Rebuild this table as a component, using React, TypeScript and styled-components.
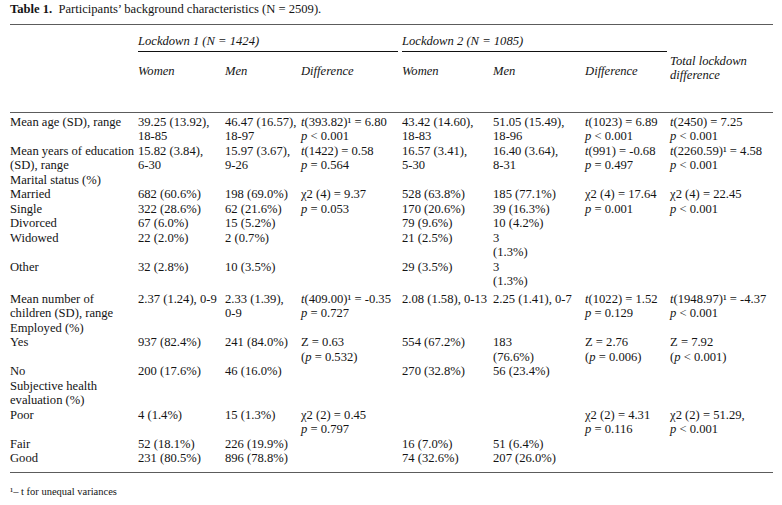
import React from "react";
import styled, { createGlobalStyle } from "styled-components";

const GlobalStyle = createGlobalStyle`
  html, body {
    margin: 0;
    padding: 0;
    background: #ffffff;
  }
  body {
    font-family: "Liberation Serif", "DejaVu Serif", serif;
    color: #141414;
  }
`;

const Page = styled.div`
  width: 782px;
  height: 505px;
  box-sizing: border-box;
  padding: 2px 9px 0 10px;
  font-size: 12.6px;
  line-height: 14.5px;
`;

const Caption = styled.div`
  margin-bottom: 7px;
`;

const Bold = styled.b`
  font-weight: 700;
  margin-right: 3px;
`;

const Table = styled.table`
  width: 763px;
  table-layout: fixed;
  border-collapse: collapse;
  border-top: 1px solid #5c5c5c;
  border-bottom: 1px solid #5c5c5c;

  thead {
    border-bottom: 1px solid #5c5c5c;
  }
`;

const Th = styled.th<{ $pt?: number; $pb?: number; $middle?: boolean }>`
  padding: ${(p) => p.$pt ?? 0}px 0 ${(p) => p.$pb ?? 0}px 0;
  text-align: left;
  font-weight: 400;
  font-style: italic;
  vertical-align: ${(p) => (p.$middle ? "middle" : "top")};
  white-space: nowrap;
`;

const Span = styled.div<{ $gap: number }>`
  padding: 9px 0 3px;
  margin-right: ${(p) => p.$gap}px;
  border-bottom: 1px solid #111;
`;

const Td = styled.td<{ $pt?: number; $pb?: number }>`
  padding: ${(p) => p.$pt ?? 0}px 0 ${(p) => p.$pb ?? 0}px 0;
  vertical-align: top;
  white-space: nowrap;
  text-align: left;
`;

const I = styled.i`
  font-style: italic;
`;

const Footnote = styled.div`
  margin-top: 13px;
  font-size: 10.5px;
  line-height: 12px;
`;

const widths = [128, 87, 76, 101, 91, 92, 85, 103];

type Cell = React.ReactNode;
type Row = { cells: Cell[]; spans?: Record<number, number>; skip?: number[]; pt?: number; pb?: number };

const L = ({ lines }: { lines: React.ReactNode[] }) => (
  <>
    {lines.map((l, i) => (
      <div key={i}>{l}</div>
    ))}
  </>
);

const tl = (df: string, v: string, sup = false) => (
  <>
    <I>t</I>({df}){sup ? "¹" : ""} = {v}
  </>
);
const pv = (op: string, v: string, paren = false) =>
  paren ? (
    <>
      (<I>p</I> {op} {v})
    </>
  ) : (
    <>
      <I>p</I> {op} {v}
    </>
  );

const rows: Row[] = [
  {
    pt: 2,
    cells: [
      "Mean age (SD), range",
      <L lines={["39.25 (13.92),", "18-85"]} />,
      <L lines={["46.47 (16.57),", "18-97"]} />,
      <L lines={[tl("393.82", "6.80", true), pv("<", "0.001")]} />,
      <L lines={["43.42 (14.60),", "18-83"]} />,
      <L lines={["51.05 (15.49),", "18-96"]} />,
      <L lines={[tl("1023", "6.89"), pv("<", "0.001")]} />,
      <L lines={[tl("2450", "7.25"), pv("<", "0.001")]} />,
    ],
  },
  {
    cells: [
      <L lines={["Mean years of education", "(SD), range"]} />,
      <L lines={["15.82 (3.84),", "6-30"]} />,
      <L lines={["15.97 (3.67),", "9-26"]} />,
      <L lines={[tl("1422", "0.58"), pv("=", "0.564")]} />,
      <L lines={["16.57 (3.41),", "5-30"]} />,
      <L lines={["16.40 (3.64),", "8-31"]} />,
      <L lines={[tl("991", "-0.68"), pv("=", "0.497")]} />,
      <L lines={[tl("2260.59", "4.58", true), pv("<", "0.001")]} />,
    ],
  },
  { cells: ["Marital status (%)", "", "", "", "", "", "", ""] },
  {
    spans: { 3: 2, 6: 2, 7: 2 },
    cells: [
      "Married",
      "682 (60.6%)",
      "198 (69.0%)",
      <L lines={["χ2 (4) = 9.37", pv("=", "0.053")]} />,
      "528 (63.8%)",
      "185 (77.1%)",
      <L lines={["χ2 (4) = 17.64", pv("=", "0.001")]} />,
      <L lines={["χ2 (4) = 22.45", pv("<", "0.001")]} />,
    ],
  },
  {
    skip: [3, 6, 7],
    cells: ["Single", "322 (28.6%)", "62 (21.6%)", null, "170 (20.6%)", "39 (16.3%)", null, null],
  },
  { cells: ["Divorced", "67 (6.0%)", "15 (5.2%)", "", "79 (9.6%)", "10 (4.2%)", "", ""] },
  {
    cells: ["Widowed", "22 (2.0%)", "2 (0.7%)", "", "21 (2.5%)", <L lines={["3", "(1.3%)"]} />, "", ""],
  },
  {
    pb: 3,
    cells: ["Other", "32 (2.8%)", "10 (3.5%)", "", "29 (3.5%)", <L lines={["3", "(1.3%)"]} />, "", ""],
  },
  {
    cells: [
      <L lines={["Mean number of", "children (SD), range"]} />,
      "2.37 (1.24), 0-9",
      <L lines={["2.33 (1.39),", "0-9"]} />,
      <L lines={[tl("409.00", "-0.35", true), pv("=", "0.727")]} />,
      "2.08 (1.58), 0-13",
      "2.25 (1.41), 0-7",
      <L lines={[tl("1022", "1.52"), pv("=", "0.129")]} />,
      <L lines={[tl("1948.97", "-4.37", true), pv("<", "0.001")]} />,
    ],
  },
  { cells: ["Employed (%)", "", "", "", "", "", "", ""] },
  {
    cells: [
      "Yes",
      "937 (82.4%)",
      "241 (84.0%)",
      <L lines={["Z = 0.63", pv("=", "0.532", true)]} />,
      "554 (67.2%)",
      <L lines={["183", "(76.6%)"]} />,
      <L lines={["Z = 2.76", pv("=", "0.006", true)]} />,
      <L lines={["Z = 7.92", pv("<", "0.001", true)]} />,
    ],
  },
  { cells: ["No", "200 (17.6%)", "46 (16.0%)", "", "270 (32.8%)", "56 (23.4%)", "", ""] },
  { cells: [<L lines={["Subjective health", "evaluation (%)"]} />, "", "", "", "", "", "", ""] },
  {
    cells: [
      "Poor",
      "4 (1.4%)",
      "15 (1.3%)",
      <L lines={["χ2 (2) = 0.45", pv("=", "0.797")]} />,
      "",
      "",
      <L lines={["χ2 (2) = 4.31", pv("=", "0.116")]} />,
      <L lines={["χ2 (2) = 51.29,", pv("<", "0.001")]} />,
    ],
  },
  { cells: ["Fair", "52 (18.1%)", "226 (19.9%)", "", "16 (7.0%)", "51 (6.4%)", "", ""] },
  { pb: 6, cells: ["Good", "231 (80.5%)", "896 (78.8%)", "", "74 (32.6%)", "207 (26.0%)", "", ""] },
];

export default function App() {
  return (
    <>
      <GlobalStyle />
      <Page>
        <Caption>
          <Bold>Table 1.</Bold> Participants’ background characteristics (N = 2509).
        </Caption>
        <Table>
          <colgroup>
            {widths.map((w, i) => (
              <col key={i} style={{ width: w }} />
            ))}
          </colgroup>
          <thead>
            <tr>
              <Th />
              <Th colSpan={3}>
                <Span $gap={4}>Lockdown 1 (N = 1424)</Span>
              </Th>
              <Th colSpan={3}>
                <Span $gap={3}>Lockdown 2 (N = 1085)</Span>
              </Th>
              <Th rowSpan={2} $middle>
                <L lines={["Total lockdown", "difference"]} />
              </Th>
            </tr>
            <tr>
              <Th />
              {["Women", "Men", "Difference", "Women", "Men", "Difference"].map((h, i) => (
                <Th key={i} $pt={12} $pb={33}>
                  {h}
                </Th>
              ))}
            </tr>
          </thead>
          <tbody>
            {rows.map((r, ri) => (
              <tr key={ri}>
                {r.cells.map((c, ci) =>
                  r.skip?.includes(ci) ? null : (
                    <Td key={ci} rowSpan={r.spans?.[ci]} $pt={r.pt} $pb={r.pb}>
                      {c}
                    </Td>
                  )
                )}
              </tr>
            ))}
          </tbody>
        </Table>
        <Footnote>¹– t for unequal variances</Footnote>
      </Page>
    </>
  );
}
